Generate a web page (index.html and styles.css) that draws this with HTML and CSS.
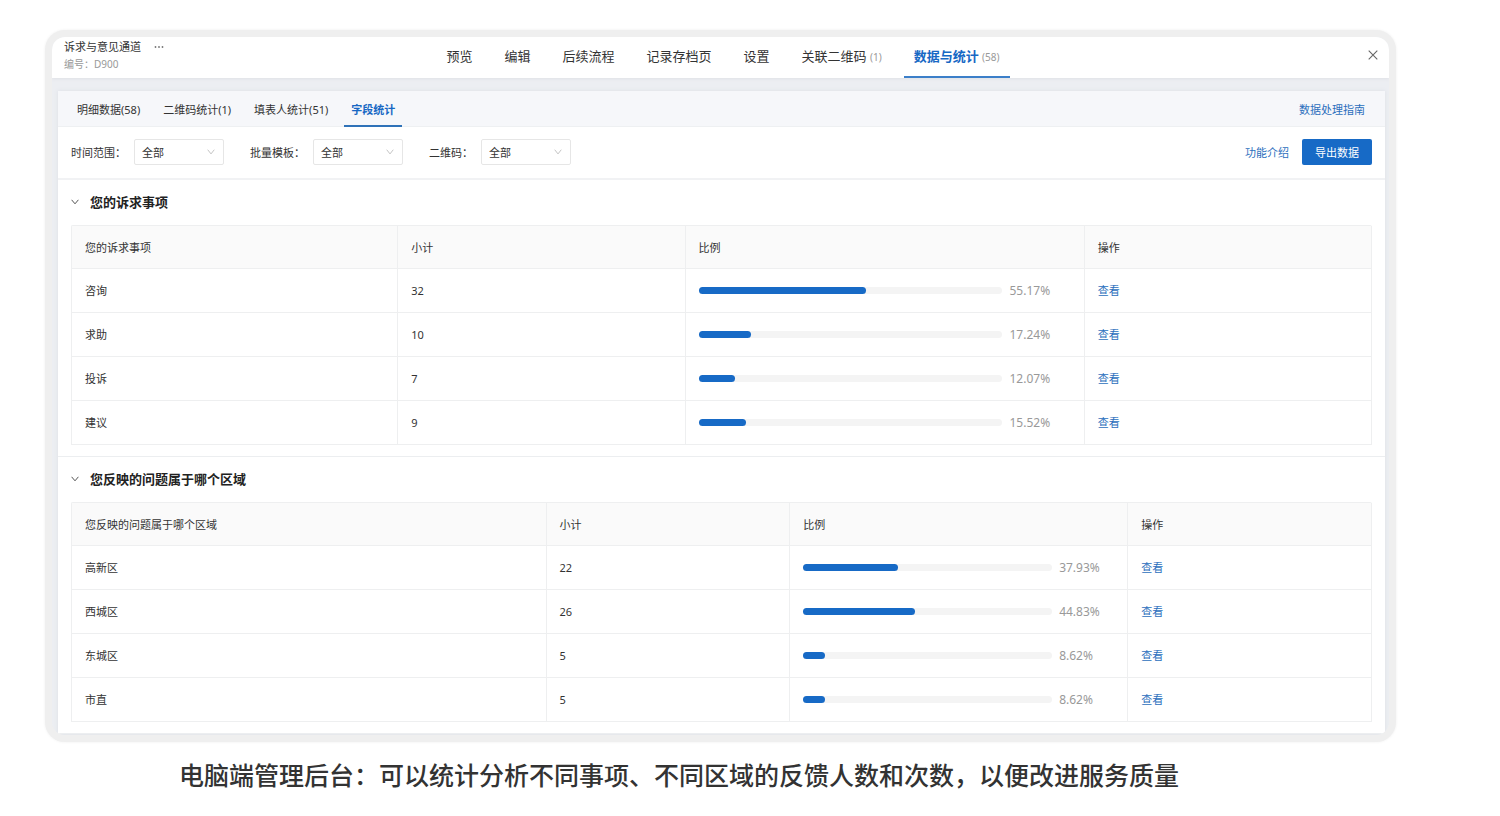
FILE: index.html
```html
<!DOCTYPE html>
<html lang="zh-CN">

<head>
	<meta charset="utf-8">
	<meta name="viewport" content="width=device-width, initial-scale=1">
	<title>数据与统计</title>
	<link rel="stylesheet" href="styles.css">
</head>

<body>
	<main class="page">
		<div class="window">
			<header class="header">
				<div class="form-info">
					<div class="form-title">
						诉求与意见通道
						<button class="icon-btn more" type="button" aria-label="更多">
							<svg width="10" height="4" viewBox="0 0 10 4" fill="#777"><circle cx="1.5" cy="2" r="0.9" /><circle cx="5" cy="2" r="0.9" /><circle cx="8.5" cy="2" r="0.9" /></svg>
						</button>
					</div>
					<div class="form-no">编号：D900</div>
				</div>
				<nav class="nav">
					<a class="nav-item" href="#">预览</a>
					<a class="nav-item" href="#">编辑</a>
					<a class="nav-item" href="#">后续流程</a>
					<a class="nav-item" href="#">记录存档页</a>
					<a class="nav-item" href="#">设置</a>
					<a class="nav-item" href="#">关联二维码 <span class="count">(1)</span></a>
					<a class="nav-item active" href="#">数据与统计 <span class="count">(58)</span></a>
				</nav>
				<button class="icon-btn close" type="button" aria-label="关闭">
					<svg width="10" height="10" viewBox="0 0 10 10" fill="none" stroke="#666" stroke-width="1.1"><path d="M0.7 0.7L9.3 9.3M9.3 0.7L0.7 9.3" /></svg>
				</button>
			</header>

			<div class="panel">
				<div class="tabs">
					<a class="tab" href="#">明细数据(58)</a>
					<a class="tab" href="#">二维码统计(1)</a>
					<a class="tab" href="#">填表人统计(51)</a>
					<a class="tab active" href="#">字段统计</a>
					<a class="link guide" href="#">数据处理指南</a>
				</div>

				<div class="filters">
					<div class="filter">
						<label for="range">时间范围：</label>
						<div class="select">
							<select id="range"><option>全部</option></select>
							<svg class="arrow" width="8" height="6" viewBox="0 0 8 6"><path d="M0.7 0.7L4 4.9L7.3 0.7" /></svg>
						</div>
					</div>
					<div class="filter">
						<label for="template">批量模板：</label>
						<div class="select">
							<select id="template"><option>全部</option></select>
							<svg class="arrow" width="8" height="6" viewBox="0 0 8 6"><path d="M0.7 0.7L4 4.9L7.3 0.7" /></svg>
						</div>
					</div>
					<div class="filter">
						<label for="qrcode">二维码：</label>
						<div class="select">
							<select id="qrcode"><option>全部</option></select>
							<svg class="arrow" width="8" height="6" viewBox="0 0 8 6"><path d="M0.7 0.7L4 4.9L7.3 0.7" /></svg>
						</div>
					</div>
					<div class="actions">
						<a class="link" href="#">功能介绍</a>
						<button class="export" type="button">导出数据</button>
					</div>
				</div>

				<section class="section">
					<h2 class="section-title">
						<svg width="8" height="6" viewBox="0 0 8 6"><path d="M0.6 0.8L4 4.8L7.4 0.8" /></svg>
						您的诉求事项
					</h2>
					<table class="table table-matter">
						<thead>
							<tr><th class="name">您的诉求事项</th><th class="total">小计</th><th class="ratio">比例</th><th>操作</th></tr>
						</thead>
						<tbody>
							<tr>
								<td>咨询</td><td>32</td>
								<td><div class="progress"><div class="track"><div class="bar" style="width: 55.17%"></div></div><span>55.17%</span></div></td>
								<td><a class="link" href="#">查看</a></td>
							</tr>
							<tr>
								<td>求助</td><td>10</td>
								<td><div class="progress"><div class="track"><div class="bar" style="width: 17.24%"></div></div><span>17.24%</span></div></td>
								<td><a class="link" href="#">查看</a></td>
							</tr>
							<tr>
								<td>投诉</td><td>7</td>
								<td><div class="progress"><div class="track"><div class="bar" style="width: 12.07%"></div></div><span>12.07%</span></div></td>
								<td><a class="link" href="#">查看</a></td>
							</tr>
							<tr>
								<td>建议</td><td>9</td>
								<td><div class="progress"><div class="track"><div class="bar" style="width: 15.52%"></div></div><span>15.52%</span></div></td>
								<td><a class="link" href="#">查看</a></td>
							</tr>
						</tbody>
					</table>
				</section>

				<section class="section">
					<h2 class="section-title">
						<svg width="8" height="6" viewBox="0 0 8 6"><path d="M0.6 0.8L4 4.8L7.4 0.8" /></svg>
						您反映的问题属于哪个区域
					</h2>
					<table class="table table-area">
						<thead>
							<tr><th class="name">您反映的问题属于哪个区域</th><th class="total">小计</th><th class="ratio">比例</th><th>操作</th></tr>
						</thead>
						<tbody>
							<tr>
								<td>高新区</td><td>22</td>
								<td><div class="progress"><div class="track"><div class="bar" style="width: 37.93%"></div></div><span>37.93%</span></div></td>
								<td><a class="link" href="#">查看</a></td>
							</tr>
							<tr>
								<td>西城区</td><td>26</td>
								<td><div class="progress"><div class="track"><div class="bar" style="width: 44.83%"></div></div><span>44.83%</span></div></td>
								<td><a class="link" href="#">查看</a></td>
							</tr>
							<tr>
								<td>东城区</td><td>5</td>
								<td><div class="progress"><div class="track"><div class="bar" style="width: 8.62%"></div></div><span>8.62%</span></div></td>
								<td><a class="link" href="#">查看</a></td>
							</tr>
							<tr>
								<td>市直</td><td>5</td>
								<td><div class="progress"><div class="track"><div class="bar" style="width: 8.62%"></div></div><span>8.62%</span></div></td>
								<td><a class="link" href="#">查看</a></td>
							</tr>
						</tbody>
					</table>
				</section>
			</div>
		</div>
		<p class="caption">电脑端管理后台：可以统计分析不同事项、不同区域的反馈人数和次数，以便改进服务质量</p>
	</main>
</body>

</html>
```

FILE: styles.css
```css
* {
	box-sizing: border-box;
}

body {
	margin: 0;
	background-color: #fff;
	color: #333;
	font-family: "Noto Sans", "Noto Sans CJK SC", sans-serif;
	font-size: 11px;
	line-height: 16px;
}

a {
	color: inherit;
	text-decoration: none;
}

button,
select {
	font: inherit;
	cursor: pointer;
}

.page {
	padding: 30px 104px 24px 45px;
}

.window {
	border: 7px solid #efefef;
	border-radius: 20px;
	background-color: #eceef2;
	box-shadow: 0 0 3px #efefef;
	overflow: hidden;
}

/* header */
.header {
	display: grid;
	grid-template-columns: 1fr auto 1fr;
	height: 41px;
	padding: 0 11px 0 12px;
	background-color: #fff;
	box-shadow: 0 1px 3px #dfe1e6;
	white-space: nowrap;
}

.form-title {
	display: flex;
	align-items: center;
	gap: 13px;
	height: 20px;
}

.form-no {
	color: #999;
	font-size: 10px;
	line-height: 14px;
}

.icon-btn {
	display: flex;
	padding: 0;
	border: 0;
	background: none;
}

.close {
	justify-self: end;
	align-self: start;
	margin-top: 13px;
}

.nav {
	display: flex;
	gap: 12px;
	margin-left: 4px;
	font-size: 13px;
}

.nav-item {
	padding: 0 10px;
	border-bottom: 2px solid transparent;
	line-height: 38px;
}

.nav-item.active {
	border-color: #3c7fc9;
	color: #1768c4;
	font-weight: bold;
}

.count {
	color: #999;
	font-size: 10px;
	font-weight: normal;
}

/* panel */
.panel {
	margin: 13px 4px 1px 6px;
	background-color: #fff;
	box-shadow: 0 0 4px #dcdfe5;
}

.tabs {
	display: flex;
	gap: 9px;
	height: 36px;
	padding: 0 20px 0 12px;
	border-bottom: 1px solid #eef0f2;
	background-color: #f6f7fa;
	line-height: 38px;
	white-space: nowrap;
}

.tab {
	height: 36px;
	padding: 0 7px;
}

.tab.active {
	border-bottom: 2px solid #2f72b8;
	color: #1768c4;
	font-weight: bold;
}

.link {
	color: #2c6fbd;
}

.guide {
	margin-left: auto;
}

.filters {
	display: flex;
	align-items: center;
	gap: 26px;
	padding: 12px 13px 13px;
	border-bottom: 2px solid #f1f2f4;
	line-height: 18px;
	white-space: nowrap;
}

.filter {
	display: flex;
	align-items: center;
	gap: 8px;
}

.filter label,
.actions .link {
	padding-top: 2px;
}

.select {
	position: relative;
}

.select select {
	display: block;
	width: 90px;
	height: 26px;
	padding: 1px 7px 0;
	border: 1px solid #e6e6e6;
	border-radius: 2px;
	background-color: #fff;
	color: #333;
	appearance: none;
}

.arrow {
	position: absolute;
	top: 10px;
	right: 9px;
	fill: none;
	stroke: #c4c4c4;
	pointer-events: none;
}

.actions {
	display: flex;
	align-items: center;
	gap: 13px;
	margin-left: auto;
}

.export {
	height: 26px;
	padding: 2px 13px 0;
	border: 0;
	border-radius: 2px;
	background-color: #176ac6;
	color: #fff;
}

/* sections */
.section {
	padding: 0 13px 11px;
	border-bottom: 1px solid #eceef0;
}

.section-title {
	display: flex;
	align-items: center;
	gap: 11px;
	height: 45px;
	margin: 0;
	padding-bottom: 2px;
	color: #222;
	font-size: 13px;
}

.section-title svg {
	fill: none;
	stroke: #555;
}

.table {
	width: 100%;
	border: 1px solid #eeeff0;
	border-width: 1px 0 0 1px;
	border-radius: 2px 2px 0 0;
	border-spacing: 0;
	table-layout: fixed;
}

.table th,
.table td {
	height: 44px;
	padding: 0 13px;
	border: 1px solid #eeeff0;
	border-width: 0 1px 1px 0;
	text-align: left;
}

.table th {
	height: 43px;
	padding-top: 2px;
	background-color: #fafafa;
	font-weight: normal;
}

.table-matter .name {
	width: 25.1%;
}

.table-matter .total {
	width: 22.1%;
}

.table-matter .ratio {
	width: 30.7%;
}

.table-area .name {
	width: 36.5%;
}

.table-area .total {
	width: 18.75%;
}

.table-area .ratio {
	width: 26%;
}

.progress {
	display: flex;
	align-items: center;
	gap: 7px;
	color: #999;
	font-size: 12px;
}

.track {
	width: calc(90% - 31px);
	border-radius: 4px;
	background-color: #f4f4f4;
}

.bar {
	height: 7px;
	border-radius: 4px;
	background-color: #176ac6;
}

.caption {
	margin: 13px 0 0 134px;
	font-size: 25px;
	font-weight: 500;
	line-height: 40px;
}
```
